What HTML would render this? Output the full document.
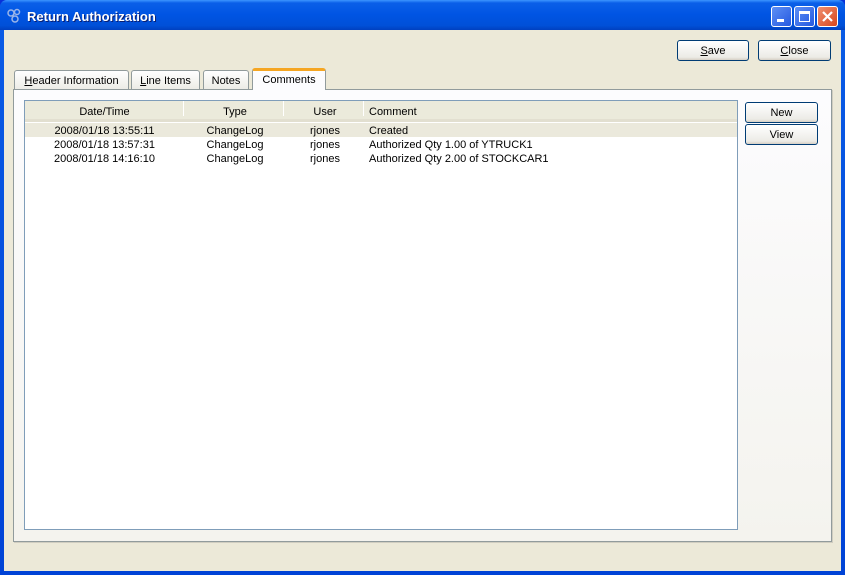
<!DOCTYPE html>
<html><head><style>
*{box-sizing:border-box;margin:0;padding:0}
body{width:845px;height:575px;overflow:hidden;font-family:Tahoma,"Liberation Sans",sans-serif;font-size:11px;color:#000;background:#0831d9}
.win{position:absolute;left:0;top:0;width:845px;height:575px;background:linear-gradient(#0a5ce6,#0043d6);border-radius:7px 7px 0 0}
.title{position:absolute;left:0;top:0;width:845px;height:30px;background:linear-gradient(#3d95ff 0%,#0a5fe8 10%,#0054e3 50%,#0050d8 85%,#0040c0 100%);border-radius:7px 7px 0 0}
.title span{position:absolute;left:27px;top:9px;color:#fff;font-weight:bold;font-size:13px;text-shadow:1px 1px #0a1e70;font-family:"Liberation Sans",sans-serif}
.client{position:absolute;left:4px;top:30px;width:837px;height:541px;background:#ece9d8}
.tb{position:absolute;top:6px;width:21px;height:21px;border:1px solid #fff;border-radius:3px;background:linear-gradient(135deg,#5d8ff5,#2559e0)}
.btn{position:absolute;height:21px;border:1px solid #003c74;border-radius:3px;background:linear-gradient(#fff,#ecebe6 85%,#d6d0c5);text-align:center;line-height:21px}
.tab{position:absolute;height:20px;border:1px solid #919b9c;border-bottom:none;border-radius:3px 3px 0 0;background:linear-gradient(#fff,#ecebe5);text-align:center;line-height:20px}
.pane{position:absolute;left:13px;top:89px;width:819px;height:453px;border:1px solid #919b9c;background:linear-gradient(#fcfcfe,#f4f3ee);box-shadow:1px 1px 0 #d0cdc0}
.list{position:absolute;left:24px;top:100px;width:714px;height:430px;border:1px solid #7f9db9;background:#fff}
.hdr{position:absolute;left:0;top:0;width:712px;height:21px;background:#ebeadb;border-bottom:3px solid #e2dfd0}
.hdr div,.row div{position:absolute;top:0;text-align:center}
.hdr div{line-height:22px}
.sep{position:absolute;top:3px;width:1px;height:15px;background:#d0cdc0;border-right:1px solid #fff}
.row{position:absolute;left:0;width:712px;height:14px;line-height:16px}
</style></head><body>
<div class="win">
<div class="title"><svg style="position:absolute;left:6px;top:8px" width="16" height="16"><circle cx="5" cy="5" r="3" fill="none" stroke="#9bb5e8" stroke-width="1.5"/><circle cx="11" cy="4" r="2.5" fill="none" stroke="#9bb5e8" stroke-width="1.5"/><circle cx="9" cy="11" r="3" fill="none" stroke="#9bb5e8" stroke-width="1.5"/></svg><span>Return Authorization</span>
<div class="tb" style="left:771px"><div style="position:absolute;left:5px;top:12px;width:7px;height:3px;background:#fff"></div></div>
<div class="tb" style="left:794px"><div style="position:absolute;left:4px;top:4px;width:11px;height:11px;border:1px solid #fff;border-top:3px solid #fff"></div></div>
<div class="tb" style="left:817px;background:linear-gradient(135deg,#f09070,#d8461d)"><svg width="19" height="19" style="position:absolute;left:0;top:0"><path d="M5 5L14 14M14 5L5 14" stroke="#fff" stroke-width="2.2"/></svg></div>
</div>
<div class="client"></div>
<div class="btn" style="left:677px;top:40px;width:72px"><u>S</u>ave</div>
<div class="btn" style="left:758px;top:40px;width:73px"><u>C</u>lose</div>
<div class="tab" style="left:14px;top:70px;width:115px"><u>H</u>eader Information</div>
<div class="tab" style="left:131px;top:70px;width:69px"><u>L</u>ine Items</div>
<div class="tab" style="left:203px;top:70px;width:46px">Notes</div>
<div class="pane"></div>
<div class="tab" style="left:252px;top:68px;width:74px;height:22px;background:#fcfcfe;border-top:3px solid #f5a623;line-height:19px;z-index:2">Comments</div>
<div class="list">
<div class="hdr">
<div style="left:0;width:159px">Date/Time</div><div class="sep" style="left:158px"></div>
<div style="left:160px;width:100px">Type</div><div class="sep" style="left:258px"></div>
<div style="left:260px;width:80px">User</div><div class="sep" style="left:338px"></div>
<div style="left:344px;text-align:left">Comment</div>
</div>
<div class="row" style="top:22px;background:#ebe9dc"><div style="left:0;width:159px">2008/01/18 13:55:11</div><div style="left:160px;width:100px">ChangeLog</div><div style="left:260px;width:80px">rjones</div><div style="left:344px">Created</div></div>
<div class="row" style="top:36px"><div style="left:0;width:159px">2008/01/18 13:57:31</div><div style="left:160px;width:100px">ChangeLog</div><div style="left:260px;width:80px">rjones</div><div style="left:344px">Authorized Qty 1.00 of YTRUCK1</div></div>
<div class="row" style="top:50px"><div style="left:0;width:159px">2008/01/18 14:16:10</div><div style="left:160px;width:100px">ChangeLog</div><div style="left:260px;width:80px">rjones</div><div style="left:344px">Authorized Qty 2.00 of STOCKCAR1</div></div>
</div>
<div class="btn" style="left:745px;top:102px;width:73px">New</div>
<div class="btn" style="left:745px;top:124px;width:73px">View</div>
</div>
</body></html>
